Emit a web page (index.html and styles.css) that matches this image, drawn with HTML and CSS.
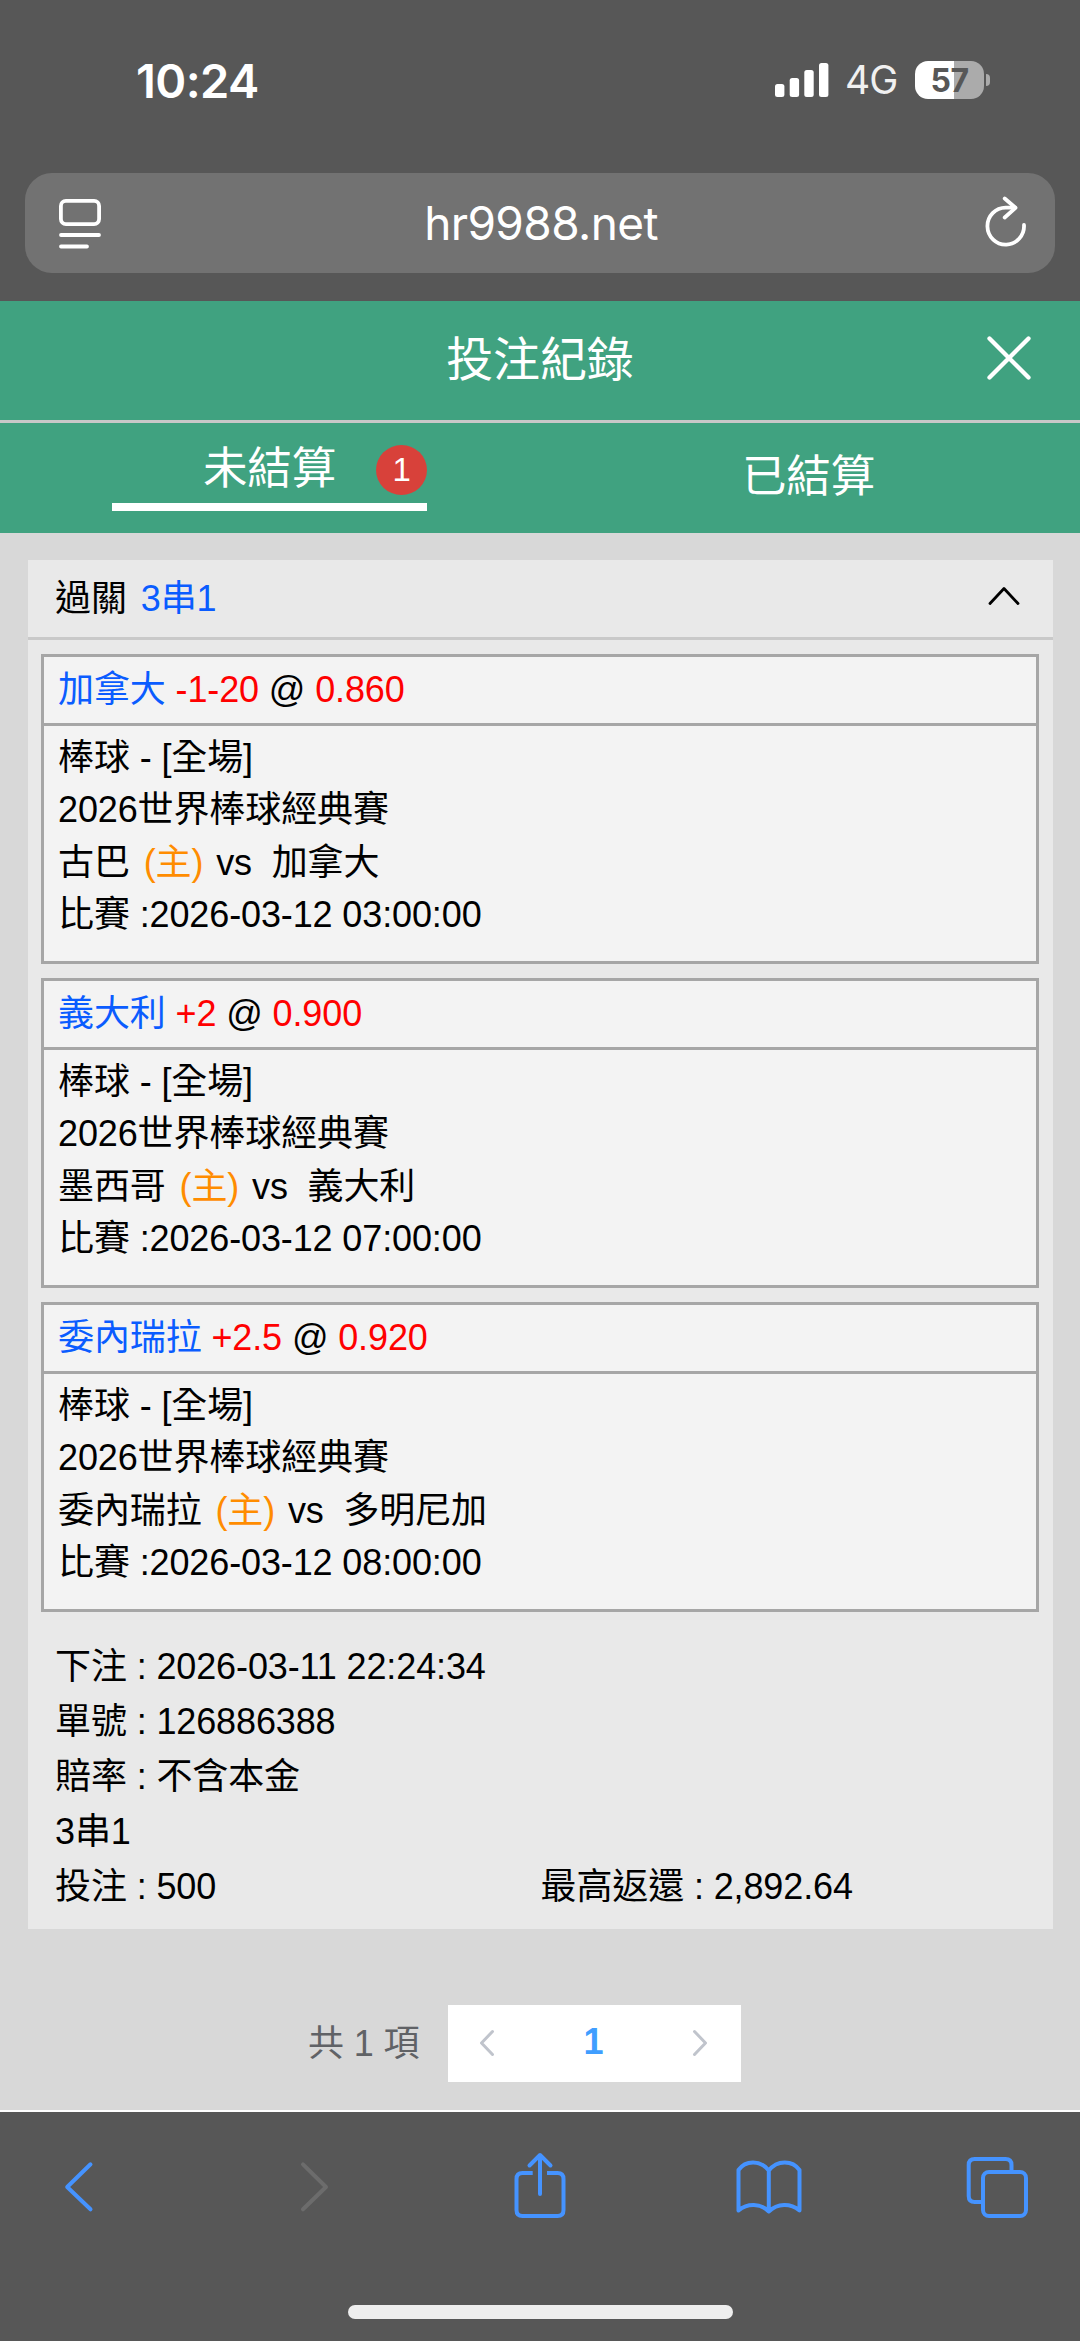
FILE: index.html
```html
<!DOCTYPE html>
<html lang="zh-Hant">
<head>
    <meta charset="UTF-8">
    <meta name="viewport" content="width=device-width, initial-scale=1.0">
    <title>投注紀錄</title>
    <link rel="stylesheet" href="styles.css">
</head>
<body>
    <div class="browser-top">
        <div class="status-bar">
            <span class="time">10:24</span>
            <div class="status-icons">
                <svg class="signal" viewBox="0 0 54 34">
                    <rect x="0" y="21" width="9.4" height="13" rx="2.5"/>
                    <rect x="14.7" y="15" width="9.4" height="19" rx="2.5"/>
                    <rect x="29.3" y="7" width="9.4" height="27" rx="2.5"/>
                    <rect x="44" y="0" width="9.4" height="34" rx="2.5"/>
                </svg>
                <span class="network">4G</span>
                <div class="battery">57</div>
                <div class="battery-cap"></div>
            </div>
        </div>

        <div class="address-bar">
            <svg class="page-icon" viewBox="0 0 42 50">
                <rect x="1.9" y="1.9" width="38.2" height="23.2" rx="5"/>
                <path d="M2 36H40M2 47.5H28"/>
            </svg>
            <span class="url">hr9988.net</span>
            <svg class="reload-icon" viewBox="0 0 42 54">
                <path d="M39 29A18.3 18.5 0 1 1 20.7 11.6H30"/>
                <path d="M19.7 2.5L30.5 11.8L19.7 21.5"/>
            </svg>
        </div>
    </div>

    <header class="page-header">
        <h1>投注紀錄</h1>
        <svg class="close" viewBox="0 0 44 44"><path d="M2.5 2.5L41.5 41.5M41.5 2.5L2.5 41.5"/></svg>
    </header>

    <nav class="tabs">
        <div class="tab active">
            <span>未結算</span>
            <span class="badge">1</span>
        </div>
        <div class="tab">已結算</div>
    </nav>

    <main class="content">
        <section class="card">
            <div class="card-header">
                <span>過關</span>
                <span class="parlay">3串1</span>
                <svg class="collapse" viewBox="0 0 32 20"><path d="M2 17.5L16 2.5L30 17.5"/></svg>
            </div>

            <div class="bet-list">
                <div class="bet">
                    <div class="bet-title"><span class="team">加拿大</span> <span class="odds">-1-20</span> @ <span class="odds">0.860</span></div>
                    <div class="bet-info">
                        <p>棒球 - [全場]</p>
                        <p>2026世界棒球經典賽</p>
                        <p>古巴 <span class="home">(主)</span> vs &nbsp;加拿大</p>
                        <p>比賽 :2026-03-12 03:00:00</p>
                    </div>
                </div>
                <div class="bet">
                    <div class="bet-title"><span class="team">義大利</span> <span class="odds">+2</span> @ <span class="odds">0.900</span></div>
                    <div class="bet-info">
                        <p>棒球 - [全場]</p>
                        <p>2026世界棒球經典賽</p>
                        <p>墨西哥 <span class="home">(主)</span> vs &nbsp;義大利</p>
                        <p>比賽 :2026-03-12 07:00:00</p>
                    </div>
                </div>
                <div class="bet">
                    <div class="bet-title"><span class="team">委內瑞拉</span> <span class="odds">+2.5</span> @ <span class="odds">0.920</span></div>
                    <div class="bet-info">
                        <p>棒球 - [全場]</p>
                        <p>2026世界棒球經典賽</p>
                        <p>委內瑞拉 <span class="home">(主)</span> vs &nbsp;多明尼加</p>
                        <p>比賽 :2026-03-12 08:00:00</p>
                    </div>
                </div>
            </div>

            <div class="summary">
                <p>下注 : 2026-03-11 22:24:34</p>
                <p>單號 : 126886388</p>
                <p>賠率 : 不含本金</p>
                <p>3串1</p>
                <div class="amounts">
                    <p>投注 : 500</p>
                    <p>最高返還 : 2,892.64</p>
                </div>
            </div>
        </section>

        <div class="pagination">
            <span class="total">共 1 項</span>
            <div class="pager">
                <svg viewBox="0 0 16 28"><path d="M13.5 2.5L2.5 14L13.5 25.5"/></svg>
                <span class="current">1</span>
                <svg viewBox="0 0 16 28"><path d="M2.5 2.5L13.5 14L2.5 25.5"/></svg>
            </div>
        </div>
    </main>

    <footer class="browser-bottom">
        <div class="toolbar">
            <svg viewBox="0 0 80 80"><path d="M50.5 17.3L27.2 40L50.5 62.3"/></svg>
            <svg class="disabled" viewBox="0 0 80 80"><path d="M33 17.3L56 40L33 62.3"/></svg>
            <svg viewBox="0 0 80 80">
                <path class="butt" d="M33.7 26H23.5Q17.5 26 17.5 32V63Q17.5 69 23.5 69H58.5Q64.5 69 64.5 63V32Q64.5 26 58.5 26H48"/>
                <path d="M41 47V8.5M30.5 18.5L41 8L51.5 18.5"/>
            </svg>
            <svg viewBox="0 0 80 80">
                <path d="M9.5 23C16.5 12.8 31.5 12.8 39.8 23.5C48 12.8 63.5 12.8 70.5 23V63.5C61.5 56 48.5 56 39.8 64.5C31.5 56 18.5 56 9.5 63.5ZM39.8 23.5V64.5"/>
            </svg>
            <svg viewBox="0 0 80 80">
                <path class="butt" d="M53.5 24V18Q53.5 12 47.5 12H16.7Q10.7 12 10.7 18V49Q10.7 55 16.7 55H24"/>
                <rect x="25" y="25" width="43" height="44" rx="6"/>
            </svg>
        </div>
        <div class="home-indicator"></div>
    </footer>
</body>
</html>
```
FILE: styles.css
```css
* {
    box-sizing: border-box;
}

body {
    margin: 0;
    font-family: "Liberation Sans", "Noto Sans CJK TC", sans-serif;
    font-size: 36px;
    letter-spacing: -0.12px;
    color: #000;
    background: #d8d8d8;
}

h1, p {
    margin: 0;
    font-weight: normal;
}

svg {
    display: block;
    flex: none;
    fill: none;
    stroke-linecap: round;
    stroke-linejoin: round;
}

/* Browser top */
.browser-top {
    height: 301px;
    background: #575757;
    color: #fff;
    font-family: Inter, sans-serif;
}

.status-bar {
    height: 173px;
    padding: 61px 90px 0 136px;
    display: flex;
    justify-content: space-between;
    align-items: flex-start;
}

.time {
    font-size: 47px;
    font-weight: 600;
    line-height: 39px;
    letter-spacing: -0.6px;
}

.status-icons {
    height: 38px;
    display: flex;
    align-items: center;
}

.signal {
    width: 54px;
    height: 34px;
    fill: #fff;
}

.network {
    margin-left: 16px;
    width: 70px;
    font-size: 39px;
    line-height: 40px;
    letter-spacing: -1px;
    color: #f0f0f0;
}

.battery {
    width: 69px;
    height: 38px;
    border-radius: 13px;
    background: linear-gradient(to right, #fff 57%, #ababab 57%);
    color: #575757;
    font-size: 32px;
    font-weight: 700;
    line-height: 39px;
    letter-spacing: -0.5px;
    text-align: center;
}

.battery-cap {
    width: 4px;
    height: 12px;
    margin-left: 2px;
    border-radius: 0 6px 6px 0;
    background: #ababab;
}

.address-bar {
    height: 100px;
    margin: 0 25px;
    padding: 0 28px 0 34px;
    border-radius: 27px;
    background: #727272;
    display: flex;
    align-items: center;
    justify-content: space-between;
}

.page-icon {
    width: 42px;
    height: 50px;
    margin-top: 2px;
    stroke: #fff;
    stroke-width: 3.8;
}

.url {
    font-size: 46px;
    line-height: 100px;
    letter-spacing: -0.6px;
    margin-right: 4px;
}

.reload-icon {
    width: 42px;
    height: 54px;
    stroke: #fff;
    stroke-width: 3.8;
}

/* Page header */
.page-header {
    position: relative;
    height: 122px;
    border-bottom: 3px solid #c8c8c8;
    background: #40a280;
    color: #fff;
    text-align: center;
}

.page-header h1 {
    font-size: 47px;
    line-height: 117px;
}

.close {
    position: absolute;
    top: 35px;
    right: 49px;
    width: 44px;
    height: 44px;
    stroke: #fff;
    stroke-width: 4.3;
}

.tabs {
    height: 110px;
    padding-right: 2px;
    background: #40a280;
    color: #fff;
    display: flex;
    justify-content: space-around;
    font-size: 44.5px;
}

.tab {
    width: 315px;
    line-height: 108px;
    text-align: center;
}

.tab.active {
    position: relative;
    height: 88px;
    border-bottom: 8px solid #fff;
    line-height: 92px;
}

.badge {
    position: absolute;
    top: 22px;
    right: 0;
    width: 51px;
    height: 50px;
    border-radius: 50%;
    background: #d8413a;
    font-size: 33px;
    line-height: 49px;
}

/* Bet records */
.content {
    height: 1579px;
    padding: 27px 27px 0 28px;
    border-bottom: 2px solid #fff;
}

.card {
    height: 1369px;
    background: #e9e9e9;
}

.card-header {
    height: 80px;
    padding: 0 33px 0 27px;
    border-bottom: 3px solid #c9c9c9;
    display: flex;
    align-items: center;
    line-height: 74px;
}

.parlay {
    margin-left: 14px;
    color: #0a5cff;
}

.collapse {
    width: 32px;
    height: 20px;
    margin: 0 0 5px auto;
    stroke: #000;
    stroke-width: 2.8;
}

.bet-list {
    padding: 14px 14px 0 13px;
}

.bet {
    height: 310px;
    margin-bottom: 14px;
    border: 3px solid #a6a6a6;
    background: #f3f3f3;
}

.bet-title {
    height: 69px;
    padding-left: 14px;
    border-bottom: 3px solid #a6a6a6;
    line-height: 65px;
}

.team {
    color: #0a5cff;
}

.odds {
    color: #f00;
}

.bet-info {
    padding: 6px 14px;
    line-height: 52.3px;
}

.home {
    margin: 0 3px 0 4px;
    color: #ff8c00;
}

.summary {
    padding: 13px 27px 0;
    line-height: 55px;
}

.amounts {
    display: grid;
    grid-template-columns: 1fr 1fr;
}

/* Pagination */
.pagination {
    margin: 76px 0 0 280px;
    display: flex;
    align-items: center;
}

.total {
    width: 140px;
    margin-bottom: 8px;
    color: #606266;
}

.pager {
    width: 293px;
    height: 77px;
    padding: 0 33px 0 31px;
    background: #fff;
    display: flex;
    align-items: center;
    justify-content: space-between;
}

.pager svg {
    width: 16px;
    height: 28px;
    margin-bottom: 2px;
    stroke: #c0c4cc;
    stroke-width: 3;
}

.current {
    margin-bottom: 3px;
    color: #409eff;
    font-weight: bold;
}

/* Browser bottom */
.browser-bottom {
    height: 229px;
    padding-top: 35px;
    background: #575757;
}

.toolbar {
    padding: 0 42px 0 40px;
    display: flex;
    justify-content: space-between;
}

.toolbar svg {
    width: 80px;
    height: 80px;
    stroke: #4593ff;
    stroke-width: 4;
}

.toolbar .disabled {
    stroke: #6c6c6c;
}

.toolbar .butt {
    stroke-linecap: butt;
}

.home-indicator {
    width: 385px;
    height: 14px;
    margin: 78px auto 0;
    border-radius: 7px;
    background: #eee;
}
```
